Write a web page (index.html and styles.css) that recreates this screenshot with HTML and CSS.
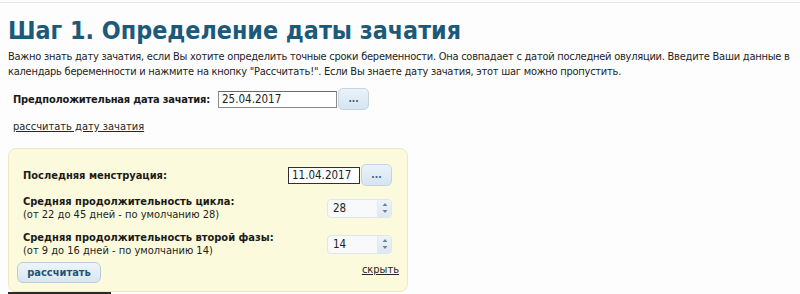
FILE: index.html
```html
<!DOCTYPE html>
<html lang="ru">
<head>
<meta charset="utf-8">
<title>Шаг 1. Определение даты зачатия</title>
<link rel="stylesheet" href="styles.css">
</head>
<body>
<div class="topline"></div>
<div class="page">
  <h1 class="title">Шаг 1. Определение даты зачатия</h1>
  <p class="intro">Важно знать дату зачатия, если Вы хотите определить точные сроки беременности. Она совпадает с датой последней овуляции. Введите Ваши данные в<br>календарь беременности и нажмите на кнопку "Рассчитать!". Если Вы знаете дату зачатия, этот шаг можно пропустить.</p>
  <div class="date-row">
    <span class="label">Предположительная дата зачатия:</span>
    <span class="field wide">25.04.2017</span>
    <span class="dots-btn">...</span>
  </div>
  <a class="link calc-link" href="#">рассчитать дату зачатия</a>
  <div class="box">
    <div class="row row-first">
      <span class="label">Последняя менструация:</span>
      <div class="controls">
        <span class="field narrow">11.04.2017</span>
        <span class="dots-btn">...</span>
      </div>
    </div>
    <div class="row row-second">
      <div class="label-block">
        <span class="label">Средняя продолжительность цикла:</span>
        <span class="hint">(от 22 до 45 дней - по умолчанию 28)</span>
      </div>
      <div class="spinner">
        <span class="spin-value">28</span>
        <span class="spin-arrows">
          <svg width="6" height="14" viewBox="0 0 6 14"><path d="M3 2 L5.5 5 L0.5 5 Z M3 12 L5.5 9 L0.5 9 Z" fill="#6d8599"/></svg>
        </span>
      </div>
    </div>
    <div class="row row-third">
      <div class="label-block">
        <span class="label">Средняя продолжительность второй фазы:</span>
        <span class="hint">(от 9 до 16 дней - по умолчанию 14)</span>
      </div>
      <div class="spinner">
        <span class="spin-value">14</span>
        <span class="spin-arrows">
          <svg width="6" height="14" viewBox="0 0 6 14"><path d="M3 2 L5.5 5 L0.5 5 Z M3 12 L5.5 9 L0.5 9 Z" fill="#6d8599"/></svg>
        </span>
      </div>
    </div>
    <div class="row row-actions">
      <span class="calc-btn">рассчитать</span>
      <a class="link hide-link" href="#">скрыть</a>
    </div>
  </div>
  <div class="under-line"></div>
</div>
</body>
</html>
```
FILE: styles.css
```css
html, body {
  margin: 0;
  padding: 0;
  background: #fdfdfd;
  overflow: hidden;
}
body {
  font-family: "DejaVu Sans Condensed", "DejaVu Sans", sans-serif;
  font-stretch: condensed;
  font-size: 11px;
  color: #1e1e1e;
  width: 800px;
  height: 294px;
}
.topline {
  height: 1px;
  margin-top: 2px;
  background: #e4e6e8;
}
.page {
  padding: 0 8px;
}
.title {
  margin: 13px 0 0 0;
  font-size: 24.8px;
  line-height: 30px;
  font-weight: bold;
  color: #1c5a79;
}
.intro {
  margin: 3px 0 0 0;
  line-height: 15px;
  font-size: 11px;
  letter-spacing: -0.25px;
  white-space: nowrap;
}
.date-row {
  display: flex;
  align-items: center;
  margin-top: 9px;
  padding-left: 5px;
  height: 22px;
}
.label {
  font-weight: bold;
  color: #1a1a1a;
}
.date-row .label {
  margin-right: 8px;
  letter-spacing: -0.2px;
}
.field {
  display: inline-flex;
  align-items: center;
  height: 17px;
  box-sizing: border-box;
  background: #fff;
  padding-left: 3px;
  font-size: 11.5px;
  color: #222;
}
.field.wide {
  width: 119px;
  border: 1px solid #8a8a8a;
  border-top-color: #6a6a6a;
}
.field.narrow {
  width: 72px;
  border: 1px solid #303030;
}
.dots-btn {
  display: inline-flex;
  align-items: center;
  justify-content: center;
  width: 31px;
  height: 22px;
  box-sizing: border-box;
  margin-left: 1px;
  border: 1px solid #c3d4e2;
  border-radius: 5px;
  background: linear-gradient(#eaf2f9, #d6e5f1);
  font-weight: bold;
  color: #3d5f7d;
  font-size: 10px;
  line-height: 10px;
  padding-bottom: 1px;
}
.link {
  color: #262626;
  text-decoration: underline;
}
.calc-link {
  display: block;
  width: max-content;
  margin: 10px 0 0 5px;
  line-height: 14px;
}
.box {
  margin-top: 14px;
  width: 400px;
  height: 144px;
  box-sizing: border-box;
  border: 1px solid #ebe9c6;
  border-radius: 8px;
  background: #fcfadc;
  padding: 15px 15px 0 8px;
}
.row {
  display: flex;
  justify-content: space-between;
  align-items: center;
}
.row-first {
  height: 22px;
  padding-left: 6px;
}
.controls {
  display: flex;
  align-items: center;
}
.label-block {
  display: flex;
  flex-direction: column;
  line-height: 13px;
  padding-left: 6px;
}
.hint {
  color: #1e1e1e;
}
.row-second {
  margin-top: 9px;
}
.row-third {
  margin-top: 10px;
}
.spinner {
  display: flex;
  align-items: stretch;
  width: 65px;
  height: 19px;
  box-sizing: border-box;
  border: 1px solid #dfe6ec;
  border-radius: 4px;
  background: #f7f9fb;
  overflow: hidden;
}
.spin-value {
  flex: 1;
  display: flex;
  align-items: center;
  padding-left: 5px;
  font-size: 11.5px;
  color: #222;
}
.spin-arrows {
  width: 13px;
  display: flex;
  align-items: center;
  justify-content: center;
  background: linear-gradient(#eef4f9, #dce8f2);
  border-left: 1px solid #e2eaf1;
}
.row-actions {
  margin-top: 5px;
  align-items: flex-end;
}
.calc-btn {
  display: inline-flex;
  align-items: center;
  justify-content: center;
  width: 84px;
  height: 21px;
  box-sizing: border-box;
  border: 1px solid #b9ccdb;
  border-radius: 6px;
  background: linear-gradient(#eef4f9, #d9e6f0);
  font-weight: bold;
  color: #1f5673;
  margin-left: 0;
}
.hide-link {
  margin-bottom: 7px;
  margin-right: -7px;
  line-height: 13px;
}
.under-line {
  margin-top: 0;
  width: 103px;
  height: 2px;
  background: #2a2a2a;
}
```
